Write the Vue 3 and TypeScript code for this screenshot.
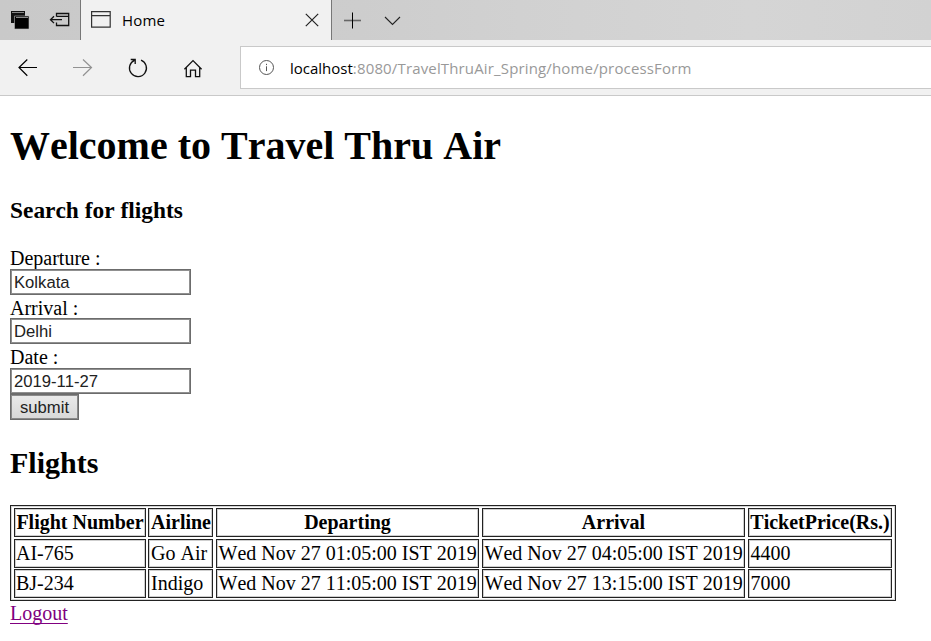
<script setup lang="ts">
interface Field {
  id: string
  label: string
  value: string
}

interface Flight {
  number: string
  airline: string
  departing: string
  arrival: string
  price: number
}

const fields: Field[] = [
  { id: 'departure', label: 'Departure :', value: 'Kolkata' },
  { id: 'arrival', label: 'Arrival :', value: 'Delhi' },
  { id: 'date', label: 'Date :', value: '2019-11-27' },
]

const columns: string[] = ['Flight Number', 'Airline', 'Departing', 'Arrival', 'TicketPrice(Rs.)']

const flights: Flight[] = [
  {
    number: 'AI-765',
    airline: 'Go Air',
    departing: 'Wed Nov 27 01:05:00 IST 2019',
    arrival: 'Wed Nov 27 04:05:00 IST 2019',
    price: 4400,
  },
  {
    number: 'BJ-234',
    airline: 'Indigo',
    departing: 'Wed Nov 27 11:05:00 IST 2019',
    arrival: 'Wed Nov 27 13:15:00 IST 2019',
    price: 7000,
  },
]
</script>

<template>
  <div class="browser">
    <div class="tabs">
      <div class="tab-tools">
        <svg class="tool" width="20" height="20" viewBox="0 0 20 20">
          <path d="M1 1h14v12H1z" fill="#111" />
          <path d="M2 2.5h12" stroke="#888" />
          <path d="M4.5 6H19v13H4.5z" fill="#000" stroke="#bbb" stroke-width=".6" />
          <path d="M6 7.5h12" stroke="#888" />
        </svg>
        <svg class="tool" width="22" height="16" viewBox="0 0 22 16" fill="none" stroke="#111" stroke-width="1.3">
          <path d="M7.5 4.5v-3h12.2v12H7.5v-3M7.5 4.3h12.2M1.5 7.7h11.5M5 4.3 1.5 7.7 5 11.1" />
        </svg>
      </div>
      <div class="tab">
        <svg class="page-icon" width="20" height="17" viewBox="0 0 20 17" fill="none" stroke="#333" stroke-width="1.2">
          <path d="M.6.6h18.6v15.6H.6zM.6 4.6h18.6" />
        </svg>
        <span class="tab-title">Home</span>
        <svg width="14" height="14" viewBox="0 0 14 14" fill="none" stroke="#222" stroke-width="1.2">
          <path d="m.8.8 12.4 12.4M13.2.8.8 13.2" />
        </svg>
      </div>
      <div class="tab-actions">
        <svg width="17" height="17" viewBox="0 0 17 17" fill="none">
          <path d="M0 8.5h17" stroke="#666" stroke-width="1.6" />
          <path d="M8.5 0.5v16" stroke="#000" stroke-width="1" />
        </svg>
        <svg width="17" height="10" viewBox="0 0 17 10" fill="none" stroke="#222" stroke-width="1.1">
          <path d="m1 1 7.5 7.4L16 1" />
        </svg>
      </div>
    </div>

    <div class="toolbar">
      <div class="nav">
        <svg width="20" height="18" viewBox="0 0 20 18" fill="none" stroke="#000" stroke-width="1.2">
          <path d="M19 8.5H1M9.3.5 1 8.5l8.3 8.2" />
        </svg>
        <svg width="20" height="18" viewBox="0 0 20 18" fill="none" stroke="#929292" stroke-width="1.2">
          <path d="M0 8.5h18.5M10 .5l8.5 8-8.5 8.2" />
        </svg>
        <svg width="20" height="20" viewBox="0 0 20 20" fill="none" stroke="#111" stroke-width="1.3">
          <path d="M13 2.1A8.5 8.5 0 1 1 6.4 2.3M2.7 1.5h4.5v4.4" />
        </svg>
        <svg width="20" height="19" viewBox="0 0 20 19" fill="none" stroke="#111" stroke-width="1.3">
          <path d="m1.4 10.2 8.6-8.6 8.6 8.6M3.3 8.5v9.2h4.2v-6.5h5v6.5h4.2V8.5" />
        </svg>
      </div>
      <div class="address">
        <svg width="16" height="16" viewBox="0 0 16 16" fill="none" stroke="#555">
          <circle cx="7.5" cy="7.5" r="7" />
          <path d="M7.5 6.3v4.8M7.5 3.8v1.3" />
        </svg>
        <span class="url"><span class="host">localhost</span><span class="path">:8080/TravelThruAir_Spring/home/processForm</span></span>
      </div>
    </div>

    <main class="page">
      <h1>Welcome to Travel Thru Air</h1>
      <h3>Search for flights</h3>
      <form class="search" @submit.prevent>
        <template v-for="field in fields" :key="field.id">
          <label :for="field.id">{{ field.label }}</label>
          <input :id="field.id" type="text" :value="field.value" />
        </template>
        <button type="submit">submit</button>
      </form>
      <h2>Flights</h2>
      <table class="flights">
        <tbody>
          <tr>
            <th v-for="column in columns" :key="column">{{ column }}</th>
          </tr>
          <tr v-for="flight in flights" :key="flight.number">
            <td>{{ flight.number }}</td>
            <td>{{ flight.airline }}</td>
            <td>{{ flight.departing }}</td>
            <td>{{ flight.arrival }}</td>
            <td>{{ flight.price }}</td>
          </tr>
        </tbody>
      </table>
      <a class="logout" href="#">Logout</a>
    </main>
  </div>
</template>

<style>
body {
  margin: 0;
  background: #fff;
}
</style>

<style scoped>
.browser {
  width: 931px;
  height: 641px;
  overflow: hidden;
  background: #fff;
  color: #000;
}

svg {
  display: block;
  flex: none;
}

.tabs {
  display: flex;
  height: 40px;
  background: linear-gradient(90deg, #c9c9c9 0, #cdcdcd 360px, #d1d1d1 520px, #d5d5d5 750px, #d2d2d2 100%);
}

.tab-tools {
  box-sizing: border-box;
  display: flex;
  align-items: center;
  width: 81px;
  padding-left: 10px;
  gap: 19px;
  border-right: 1px solid #777;
}

.tab {
  box-sizing: border-box;
  display: flex;
  align-items: center;
  width: 251px;
  padding: 0 12px 0 10px;
  background: #f1f1f1;
  border-right: 1px solid #777;
}

.page-icon {
  margin-top: -1px;
}

.tab-title {
  flex: 1;
  margin-left: 11px;
  font: 15px/20px "Open Sans", "Noto Sans", sans-serif;
  letter-spacing: 0.2px;
}

.tab-actions {
  display: flex;
  align-items: center;
  gap: 23px;
  padding: 1px 0 0 12px;
}

.toolbar {
  box-sizing: border-box;
  display: flex;
  height: 56px;
  padding-top: 6px;
  background: #f1f1f1;
  border-bottom: 1px solid #c9c9c9;
}

.nav {
  box-sizing: border-box;
  display: flex;
  align-items: center;
  gap: 35px;
  width: 240px;
  height: 44px;
  padding-left: 18px;
}

.address {
  box-sizing: border-box;
  display: flex;
  align-items: center;
  flex: 1;
  height: 43px;
  padding-left: 18px;
  gap: 15px;
  background: #fff;
  border: 1px solid #c9c9c9;
  border-right: 0;
}

.url {
  font: 15px/20px "Open Sans", "Noto Sans", sans-serif;
  white-space: nowrap;
}

.path {
  color: #999;
  letter-spacing: 0.15px;
}

.page {
  padding: 0 10px;
  font: 20px/22px "Liberation Serif", "Times New Roman", serif;
  font-kerning: none;
}

h1 {
  margin: 27px 0 0;
  font-size: 40px;
  line-height: 46px;
}

h3 {
  margin: 28px 0 0;
  font-size: 23.4px;
  line-height: 26px;
}

h2 {
  margin: 26px 0 0;
  font-size: 30px;
  line-height: 34px;
}

.search {
  display: flex;
  flex-direction: column;
  align-items: flex-start;
  margin-top: 22px;
}

.search label {
  height: 23.5px;
  line-height: 27px;
}

.search input {
  box-sizing: border-box;
  width: 181px;
  height: 26px;
  padding: 2px 3px 0;
  border: 1px solid #6c6c6c;
  border-radius: 0;
  box-shadow: inset 0 0 0 1px #909090;
  background: #fff;
  color: #222;
  font: 16.67px "Liberation Sans", Arial, sans-serif;
}

.search button {
  box-sizing: border-box;
  width: 69px;
  height: 26px;
  padding: 2px 0 0;
  border: 1px solid #6c6c6c;
  border-radius: 0;
  box-shadow: inset 0 0 0 1px #8a8a8a;
  background: linear-gradient(#eaeaea, #d8d8d8);
  color: #222;
  font: 16.67px "Liberation Sans", Arial, sans-serif;
}

.flights {
  box-sizing: border-box;
  display: block;
  width: 886px;
  height: 96px;
  margin-top: 25px;
  padding: 2px 3px;
  border: 1px solid #222;
  box-shadow: inset 0 0 0 1px #d6d6d6;
}

.flights tbody {
  display: grid;
  grid-template-rows: 29px 28px 28px;
  row-gap: 2px;
}

.flights tr {
  display: grid;
  grid-template-columns: 132px 66px 264px 264px 144px;
  column-gap: 2px;
  height: 28px;
}

.flights th,
.flights td {
  padding: 0 1px;
  border: 1px solid #222;
  box-shadow: inset 0 0 0 1px #cfcfcf;
  line-height: 27px;
  white-space: nowrap;
}

.flights td:nth-child(2) {
  padding-left: 2px;
}

.flights td:nth-child(n + 3) {
  padding-left: 1.5px;
}

.flights th:nth-child(n + 2):nth-child(-n + 4),
.flights td:nth-child(n + 2):nth-child(-n + 4) {
  margin-right: 1px;
}

.flights th {
  padding: 0;
}

.flights th:nth-child(2) {
  padding-left: 1px;
}

.logout {
  display: inline-block;
  margin-top: 1px;
  color: #800080;
  text-decoration: underline;
  text-decoration-thickness: 1px;
  text-decoration-skip-ink: none;
  text-underline-offset: 3px;
}
</style>
